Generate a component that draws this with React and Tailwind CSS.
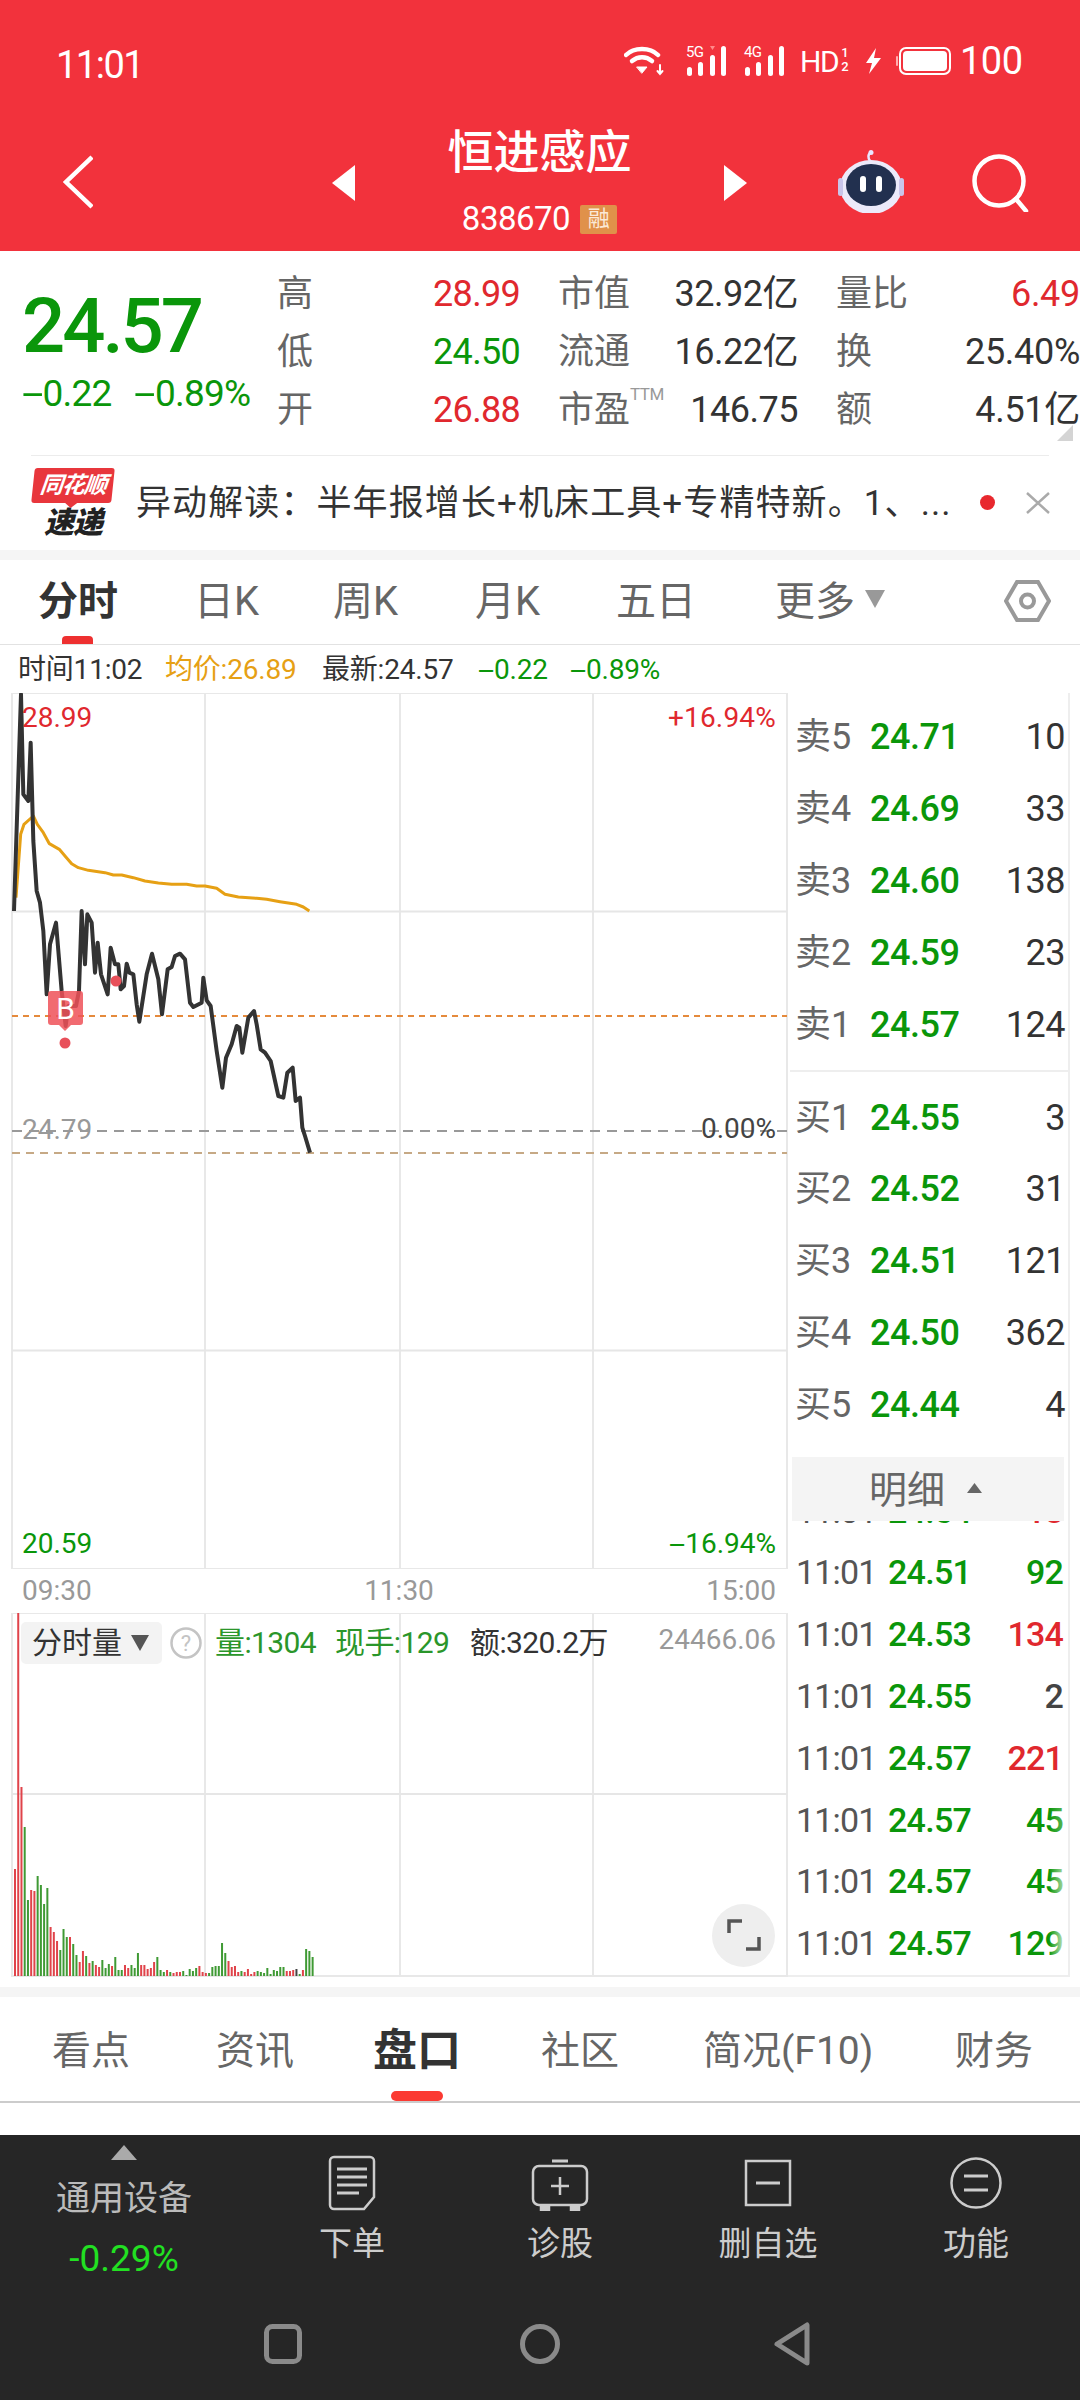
import { useState } from 'react'

const font = { fontFamily: 'Roboto, "Noto Sans CJK SC", sans-serif' }

// page coordinates of the two intraday lines, traced at 3x
const pricePts = [[42,690],[63,40],[70,340],[85,360],[92,185],[100,480],[110,630],[120,665],[130,750],[140,940],[150,790],[168,725],[185,930],[197,1035],[205,975],[228,975],[237,930],[245,690],[255,850],[262,700],[275,725],[285,875],[293,785],[303,880],[323,940],[332,800],[345,850],[355,850],[362,925],[372,915],[380,848],[388,875],[400,880],[410,970],[418,1022],[440,880],[456,818],[475,895],[486,1000],[503,865],[515,858],[525,825],[540,818],[555,835],[570,965],[580,978],[605,965],[610,890],[620,958],[632,975],[650,1110],[667,1220],[678,1130],[695,1090],[710,1035],[718,1040],[727,1115],[745,1010],[762,990],[770,1030],[782,1105],[795,1115],[812,1140],[835,1245],[850,1250],[862,1175],[878,1160],[887,1260],[900,1250],[907,1340],[915,1365],[930,1415]]
const avgPts = [[48,650],[62,460],[72,430],[100,405],[112,430],[130,455],[148,488],[178,505],[195,525],[215,548],[235,560],[265,568],[315,575],[340,582],[365,582],[400,590],[435,600],[475,606],[515,610],[560,610],[590,615],[615,615],[650,622],[675,640],[715,648],[770,652],[800,655],[840,662],[890,670],[910,678],[928,690]]
const toLine = (pts) => pts.map(([x, y]) => `${x / 3},${y / 3 + 680}`).join(' ')

const volumes = 'r107 r363 r189 g149 g76 r86 r85 g100 g91 g72 g88 r49 r44 r35 g26 g47 g39 r39 g32 g21 r14 r25 g20 r13 g15 r11 r9 g16 g8 g12 r10 g19 g6 g6 r11 r8 g11 g8 g23 r11 r11 r7 r8 r14 g19 g6 g4 r6 g4 r3 r4 r4 g5 g1 g7 g5 g8 r10 r4 r3 g3 g9 g10 g10 g33 g23 r15 r9 r10 r4 g5 r4 r7 r2 r4 g5 g4 g3 g8 g2 g6 g5 g9 g9 r5 r5 r6 k7 g2 r6 g27 g25 g19'.split(' ')
const volColor = { r: '#e0434a', g: '#3f9a34', k: '#444' }

const stats = [
  ['高', '28.99', 'text-[#e0282e]', '市值', '32.92亿', '量比', '6.49', 'text-[#e0282e]'],
  ['低', '24.50', 'text-[#0a960a]', '流通', '16.22亿', '换', '25.40%', 'text-[#333]'],
  ['开', '26.88', 'text-[#e0282e]', '市盈', '146.75', '额', '4.51亿', 'text-[#333]'],
]
const sells = [['卖5', '24.71', '10'], ['卖4', '24.69', '33'], ['卖3', '24.60', '138'], ['卖2', '24.59', '23'], ['卖1', '24.57', '124']]
const buys = [['买1', '24.55', '3'], ['买2', '24.52', '31'], ['买3', '24.51', '121'], ['买4', '24.50', '362'], ['买5', '24.44', '4']]
const trades = [
  ['24.54', '18', 'text-[#e0282e]', ''],
  ['24.51', '92', 'text-[#0a960a]', ''],
  ['24.53', '134', 'text-[#e0282e]', ''],
  ['24.55', '2', 'text-[#444]', ''],
  ['24.57', '221', 'text-[#e0282e]', ''],
  ['24.57', '45', 'text-[#0a960a]', 'opacity-30'],
  ['24.57', '45', 'text-[#0a960a]', 'opacity-60'],
  ['24.57', '129', 'text-[#0a960a]', 'opacity-70'],
]

// the app draws its minus sign wider than a plain hyphen
const Neg = () => <span className="inline-block origin-left scale-x-[2.1] mr-[0.3em]">-</span>

const Signal = ({ label, hot }) => (
  <div className="relative w-[41px] h-[30px]">
    <span className="absolute left-0 -top-[1px] text-[15px] leading-[15px] tracking-[-0.8px] text-white">{label}</span>
    <svg viewBox="0 0 41 30" className="absolute inset-0 w-full h-full" fill="white">
      <rect x="1" y="21" width="5" height="9" rx="2.5" />
      <rect x="12" y="16" width="5" height="14" rx="2.5" />
      <rect x="24" y="9" width="5" height="21" rx="2.5" />
      <rect x="35" y="0" width="5" height="30" rx="2.5" />
      {hot && <path d="M24 0h5l-2.5 4z" fill="#ff8a8a" />}
    </svg>
  </div>
)

const StatusBar = () => (
  <div className="h-[100px] pt-[46px] pl-[56px] flex items-start text-white">
    <span className="w-[84px] text-[38px] leading-[38px] tracking-[-1.5px] whitespace-nowrap">11:01</span>
    <div className="ml-[484px] flex items-start">
      <svg viewBox="0 0 40 30" className="w-[40px] h-[30px]" fill="none" stroke="white" strokeLinecap="round">
        <path d="M2 9C10 1 26 1 34 9" strokeWidth="4.5" />
        <path d="M8 15c6-5 14-5 20 0" strokeWidth="4.5" />
        <path d="M13 21h10l-5 6z" fill="white" strokeWidth="1" />
        <path d="M36 19v9m-2.5-3 2.5 3 2.5-3" strokeWidth="2" />
      </svg>
      <div className="ml-[22px]"><Signal label="5G" hot /></div>
      <div className="ml-[17px]"><Signal label="4G" /></div>
      <span className="ml-[15px] w-[39px] text-[30px] leading-[31px] tracking-[-1.5px] whitespace-nowrap">HD</span>
      <span className="ml-[2px] w-[8px] flex flex-col items-center text-[13px] leading-[14px] font-medium"><span>1</span><span>2</span></span>
      <svg viewBox="0 0 17 26" className="ml-[16px] mt-[2px] w-[17px] h-[26px]" fill="white"><path d="M11 0 1 15h6l-3 11 12-16H9z" /></svg>
      <svg viewBox="0 0 56 28" className="ml-[13px] mt-[1px] w-[56px] h-[28px]" fill="none">
        <rect x="5" y="1" width="50" height="26" rx="6" stroke="white" strokeWidth="2" />
        <rect x="8" y="4" width="44" height="20" rx="4" fill="white" />
        <path d="M2 10v8" stroke="#ffb0b0" strokeWidth="2" strokeLinecap="round" />
      </svg>
      <span className="ml-[9px] text-[38px] leading-[31px] tracking-[-0.5px]">100</span>
    </div>
  </div>
)

// round robot head on the title bar
const Robot = () => (
  <svg viewBox="0 0 66 64" className="w-[66px] h-[64px]">
    <path d="M32 12c-2-3-2-6 0-8" fill="none" stroke="#e9e6ff" strokeWidth="2.5" />
    <circle cx="33" cy="3.5" r="2.5" fill="#e9e6ff" />
    <ellipse cx="33" cy="38" rx="31" ry="27" fill="#eceafa" />
    <rect x="0" y="29" width="5" height="18" rx="2.5" fill="#c9c5ea" />
    <rect x="61" y="29" width="5" height="18" rx="2.5" fill="#c9c5ea" />
    <ellipse cx="33" cy="36" rx="25" ry="21" fill="#22304f" />
    <rect x="22" y="27" width="6" height="16" rx="3" fill="white" />
    <rect x="38" y="27" width="6" height="16" rx="3" fill="white" />
  </svg>
)

const TitleBar = () => (
  <div className="h-[151px] flex items-start text-white">
    <svg viewBox="0 0 30 54" className="ml-[63px] mt-[55px] w-[30px] h-[54px]" fill="none" stroke="white" strokeWidth="4.5">
      <path d="M29 2 3 27l26 25" />
    </svg>
    <svg viewBox="0 0 23 36" className="ml-[239px] mt-[65px] w-[23px] h-[36px]" fill="white"><path d="M23 0v36L0 18z" /></svg>
    <div className="w-[369px] flex flex-col items-center">
      <span className="mt-[29px] h-[46px] text-[46px] leading-[46px] font-medium">恒进感应</span>
      <div className="mt-[29px] flex items-center">
        <span className="text-[33px] leading-[30px] tracking-[-0.5px]">838670</span>
        <span className="ml-[10px] w-[37px] h-[29px] rounded-[2px] bg-[#e0914a] flex items-center justify-center text-[22px] leading-none text-[#fbe9d6]">融</span>
      </div>
    </div>
    <svg viewBox="0 0 23 36" className="mt-[65px] w-[23px] h-[36px]" fill="white"><path d="M0 0v36l23-18z" /></svg>
    <div className="ml-[91px] mt-[49px]"><Robot /></div>
    <svg viewBox="0 0 58 58" className="ml-[68px] mt-[54px] w-[58px] h-[58px]" fill="none" stroke="white" strokeWidth="4.5">
      <circle cx="27" cy="27" r="24.5" />
      <path d="m44 45 10 12" strokeLinecap="round" />
    </svg>
  </div>
)

const QuotePanel = () => (
  <div className="relative h-[204px] flex bg-white">
    <div className="w-[277px] pl-[22px] pt-[43px]">
      <div className="text-[76px] leading-[64px] font-medium tracking-[-3px] text-[#0a960a]">24.57</div>
      <div className="mt-[21px] flex text-[37px] leading-[30px] tracking-[-0.8px] text-[#0a960a]">
        <span><Neg />0.22</span>
        <span className="ml-[23px]"><Neg />0.89%</span>
      </div>
    </div>
    <div className="pt-[14px] flex flex-col">
      {stats.map(([a, av, ac, b, bv, c, cv, cc], i) => (
        <div key={a} className="h-[58px] w-[803px] flex items-center text-[36px] leading-none">
          <div className="w-[243px] flex justify-between items-center">
            <span className="text-[#666]">{a}</span>
            <span className={`tracking-[-0.7px] ${ac}`}>{av}</span>
          </div>
          <div className="ml-[38px] w-[240px] flex justify-between items-center">
            <span className="text-[#666]">{b}{i === 2 && <sup className="text-[17px] leading-none align-[14px] tracking-[-0.5px] text-[#999]">TTM</sup>}</span>
            <span className="tracking-[-0.5px] text-[#333]">{bv}</span>
          </div>
          <div className="ml-[38px] w-[244px] flex justify-between items-center">
            <span className="text-[#666]">{c}</span>
            <span className={`tracking-[-0.3px] ${cc}`}>{cv}</span>
          </div>
        </div>
      ))}
    </div>
    <svg viewBox="0 0 16 16" className="absolute right-[7px] top-[174px] w-[16px] h-[16px]" fill="#d4d4d4"><path d="M16 0v16H0z" /></svg>
  </div>
)

const NewsBar = () => (
  <div className="h-[94px] bg-white flex items-center">
    <div className="ml-[32px] w-[82px] flex flex-col items-center">
      <div className="relative w-[80px] h-[35px] -skew-x-6 rounded-[3px] bg-[#e8363c] flex items-center justify-center text-[23px] leading-none font-bold italic text-white tracking-[-1px]">
        同花顺
        <span className="absolute left-[34px] -bottom-[5px] w-0 h-0 border-x-[6px] border-x-transparent border-t-[5px] border-t-[#e8363c]" />
      </div>
      <div className="mt-[5px] text-[30px] leading-[30px] font-black italic text-[#222] tracking-[-1px]">速递</div>
    </div>
    <span className="ml-[22px] mt-[2px] w-[816px] whitespace-nowrap text-[35px] leading-none text-[#333] tracking-[1.1px]">异动解读：半年报增长+机床工具+专精特新。1、...</span>
    <span className="ml-[28px] w-[15px] h-[15px] rounded-full bg-[#e8282e]" />
    <svg viewBox="0 0 24 22" className="ml-[31px] w-[24px] h-[22px]" stroke="#aaa" strokeWidth="2.5"><path d="M1 1l22 20M23 1 1 21" /></svg>
  </div>
)

const ChartTabs = () => {
  const [active] = useState('分时')
  return (
    <div className="h-[85px] bg-white border-b border-[#e2e2e2] relative flex items-center text-[40px] leading-none text-[#666]">
      <span className="ml-[38px] w-[156px] font-bold text-[#333]">分时</span>
      <span className="w-[139px]">日K</span>
      <span className="w-[142px]">周K</span>
      <span className="w-[141px]">月K</span>
      <span className="w-[159px]">五日</span>
      <span>更多</span>
      <svg viewBox="0 0 20 18" className="ml-[10px] -mt-[6px] w-[20px] h-[18px]" fill="#999"><path d="M0 0h20L10 18z" /></svg>
      <svg viewBox="0 0 47 44" className="ml-[119px] -mt-[2px] w-[47px] h-[44px]" fill="none" stroke="#999" strokeWidth="4">
        <path d="M13 3h21l11 19-11 19H13L2 22z" />
        <circle cx="23.5" cy="22" r="6.5" />
      </svg>
      {active && <span className="absolute left-[62px] bottom-0 w-[31px] h-[8px] rounded-t-[4px] bg-[#ee3030]" />}
    </div>
  )
}

const InfoRow = () => (
  <div className="h-[48px] pt-[2px] flex items-center pl-[18px] text-[28px] leading-none tracking-[-0.2px] bg-white">
    <span className="w-[147px] text-[#333]">时间11:02</span>
    <span className="w-[157px] text-[#e6a014]">均价:26.89</span>
    <span className="w-[156px] text-[#333]">最新:24.57</span>
    <span className="w-[92px] text-[#0a960a]"><Neg />0.22</span>
    <span className="text-[#0a960a]"><Neg />0.89%</span>
  </div>
)

const PriceChart = () => (
  <div className="relative h-[876px] text-[28px] leading-none">
    <svg viewBox="0 692 788 876" className="absolute inset-0 w-[788px] h-[876px]" fill="none">
      <g stroke="#e8e8e8" strokeWidth="2">
        <rect x="12" y="692" width="775" height="876" />
        <path d="M205 692v876M400 692v876M593 692v876" />
        <path d="M12 910.5h775M12 1349.5h775" stroke="#e6e6e6" />
      </g>
      <path d="M12 1015h775" stroke="#e58a3c" strokeWidth="2" strokeDasharray="6 5" />
      <path d="M12 1130h775" stroke="#999" strokeWidth="2" strokeDasharray="10 7" />
      <path d="M12 1152h775" stroke="#c6a985" strokeWidth="2" strokeDasharray="8 6" />
      <polyline points={toLine(avgPts)} stroke="#e6a014" strokeWidth="3" strokeLinejoin="round" />
      <polyline points={toLine(pricePts)} stroke="#333" strokeWidth="4" strokeLinejoin="round" />
      <circle cx="116" cy="980" r="5.5" fill="#e8505a" />
      <circle cx="65" cy="1042" r="5.5" fill="#e8505a" />
      <path d="M51 990h29a3 3 0 0 1 3 3v28a3 3 0 0 1-3 3H71l-6 6-6-6h-8a3 3 0 0 1-3-3v-28a3 3 0 0 1 3-3z" fill="#ee5158" fillOpacity=".85" />
    </svg>
    <span className="absolute left-[50px] top-[301px] w-[31px] text-center text-[30px] text-white">B</span>
    <span className="absolute left-[22px] top-[11px] text-[#e0282e]">28.99</span>
    <span className="absolute right-[12px] top-[11px] tracking-[0.2px] text-[#e0282e]">+16.94%</span>
    <span className="absolute left-[22px] top-[423px] text-[#999]">24.79</span>
    <span className="absolute right-[12px] top-[422px] text-[#444]">0.00%</span>
    <span className="absolute left-[22px] bottom-[11px] text-[#0a960a]">20.59</span>
    <span className="absolute right-[12px] bottom-[11px] text-[#0a960a]"><Neg />16.94%</span>
  </div>
)

const TimeAxis = () => (
  <div className="h-[44px] ml-[22px] mr-[12px] flex items-center justify-between text-[28px] leading-none text-[#999]">
    <span>09:30</span>
    <span>11:30</span>
    <span>15:00</span>
  </div>
)

const VolumeChart = () => (
  <div className="relative h-[364px] text-[30px] leading-none">
    <svg viewBox="0 1612 788 364" className="absolute inset-0 w-[788px] h-[364px]" fill="none">
      <g stroke="#e8e8e8" strokeWidth="2">
        <rect x="12" y="1612" width="775" height="363" />
        <path d="M205 1612v363M400 1612v363M593 1612v363" />
        <path d="M12 1793h775" stroke="#e6e6e6" />
      </g>
      {volumes.map((v, i) => {
        const h = Number(v.slice(1))
        return <rect key={i} x={14 + i * 3.235} y={1975 - h} width="2" height={h} fill={volColor[v[0]]} />
      })}
    </svg>
    <div className="absolute left-[21px] top-[9px] flex items-center">
      <div className="w-[141px] h-[42px] rounded-[5px] bg-[#f3f3f3] flex items-center pl-[11px] text-[#333]">
        <span>分时量</span>
        <svg viewBox="0 0 18 16" className="ml-[9px] w-[18px] h-[16px]" fill="#555"><path d="M0 0h18L9 16z" /></svg>
      </div>
      <svg viewBox="0 0 32 32" className="ml-[8px] w-[32px] h-[32px]" fill="none">
        <circle cx="16" cy="16" r="14.5" stroke="#c4c4c4" strokeWidth="2.5" />
        <text x="16" y="24" textAnchor="middle" fontSize="22" fill="#c4c4c4" style={font}>?</text>
      </svg>
      <span className="ml-[13px] w-[120px] text-[#2a962a] tracking-[-0.6px]">量:1304</span>
      <span className="w-[135px] text-[#2a962a] tracking-[-0.6px]">现手:129</span>
      <span className="text-[#333] tracking-[-0.6px]">额:320.2万</span>
    </div>
    <span className="absolute right-[12px] top-[13px] text-[28px] text-[#999]">24466.06</span>
    <div className="absolute right-[13px] bottom-[10px] w-[63px] h-[63px] rounded-full bg-[#eeeeee] flex items-center justify-center">
      <svg viewBox="0 0 34 34" className="w-[34px] h-[34px]" fill="none" stroke="#555" strokeWidth="3.5">
        <path d="M2 15V3h13M32 19v12H19" />
      </svg>
    </div>
  </div>
)

const BookRow = ({ label, price, vol, h }) => (
  <div className={`flex items-center pl-[7px] ${h}`}>
    <span className="w-[75px] text-[36px] leading-none text-[#666]">{label}</span>
    <span className="w-[96px] text-[36px] leading-none font-medium tracking-[-0.5px] text-[#0a960a]">{price}</span>
    <span className="w-[99px] text-right text-[36px] leading-none tracking-[-0.5px] text-[#333]">{vol}</span>
  </div>
)

const OrderBook = () => (
  <div className="w-[282px] h-[1284px] border-r-2 border-b-2 border-[#eeeeee] flex flex-col">
    <div className="pt-[8px]">
      {sells.map(([l, p, v]) => <BookRow key={l} label={l} price={p} vol={v} h="h-[72px]" />)}
    </div>
    <div className="mt-[9px] h-[2px] ml-[2px] bg-[#eeeeee]" />
    <div className="mt-[10px]">
      {buys.map(([l, p, v]) => <BookRow key={l} label={l} price={p} vol={v} h="h-[71.8px]" />)}
    </div>
    <div className="relative z-10 mt-[16px] mx-[4px] h-[64px] shrink-0 bg-[#f4f4f4] flex items-center text-[38px] leading-none text-[#666]">
      <span className="ml-[77px] mt-[2px]">明细</span>
      <svg viewBox="0 0 15 10" className="ml-[22px] -mt-[2px] w-[15px] h-[10px]" fill="#666"><path d="M7.5 0 15 10H0z" /></svg>
    </div>
    <div className="flex-1 overflow-hidden">
      <div className="-mt-[41px]">
        {trades.map(([p, v, c, fade], i) => (
          <div key={i} className="h-[61.8px] flex items-center pl-[8px] text-[34px] leading-none">
            <span className="w-[92px] tracking-[-0.8px] text-[#555]">11:01</span>
            <span className="w-[95px] font-medium tracking-[-0.7px] text-[#0a960a]">{p}</span>
            <span className={`relative w-[80px] text-right tracking-[-0.8px] font-medium ${c}`}>
              {v}
              {fade && <span className={`absolute right-0 top-0 w-[14px] h-full bg-gradient-to-r from-transparent to-white ${fade}`} />}
            </span>
          </div>
        ))}
      </div>
    </div>
  </div>
)

const SectionTabs = () => (
  <div className="relative h-[106px] pt-[4px] bg-white border-b-2 border-[#cccccc] flex items-center text-[39px] leading-none text-[#666]">
    <span className="ml-[52px] w-[164px]">看点</span>
    <span className="w-[157px]">资讯</span>
    <span className="w-[168px] text-[44px] font-bold text-[#333]">盘口</span>
    <span className="w-[162px]">社区</span>
    <span className="w-[252px]">简况(F10)</span>
    <span>财务</span>
    <span className="absolute left-[391px] bottom-0 w-[52px] h-[10px] rounded-[5px] bg-[#fb3a32]" />
  </div>
)

const ToolItem = ({ label, width, children }) => (
  <div className={`${width} flex flex-col items-center`}>
    <div className="h-[62px] flex items-end">{children}</div>
    <span className="mt-[16px] text-[33px] leading-none text-[#cccccc]">{label}</span>
  </div>
)

const Toolbar = () => (
  <div className="h-[172px] flex items-start">
    <div className="w-[248px] flex flex-col items-center">
      <svg viewBox="0 0 26 15" className="mt-[10px] w-[26px] h-[15px]" fill="#aaa"><path d="M13 0l13 15H0z" /></svg>
      <span className="mt-[21px] text-[34px] leading-none text-[#bbbbbb]">通用设备</span>
      <span className="mt-[25px] text-[37px] leading-none text-[#22e022]">-0.29%</span>
    </div>
    <div className="flex pt-[14px]">
      <ToolItem label="下单" width="w-[208px]">
        <svg viewBox="0 0 48 56" className="w-[48px] h-[56px]" fill="none" stroke="#ccc" strokeWidth="2.5">
          <path d="M6 2h36a4 4 0 0 1 4 4v36l-10 12H6a4 4 0 0 1-4-4V6a4 4 0 0 1 4-4z" />
          <path d="M9 14h30M9 22h30M9 30h30M9 38h22" strokeWidth="3" />
        </svg>
      </ToolItem>
      <ToolItem label="诊股" width="w-[208px]">
        <svg viewBox="0 0 58 52" className="w-[58px] h-[52px]" fill="none" stroke="#ccc" strokeWidth="2.5">
          <path d="M21 2h16" strokeWidth="3" />
          <rect x="2" y="7" width="54" height="39" rx="6" />
          <path d="M29 18v18M20 27h18" />
          <path d="M10 47v4h8v-4M40 47v4h8v-4" fill="#ccc" />
        </svg>
      </ToolItem>
      <ToolItem label="删自选" width="w-[208px]">
        <svg viewBox="0 0 48 48" className="mb-[4px] w-[48px] h-[48px]" fill="none" stroke="#ccc" strokeWidth="2.5">
          <rect x="2" y="2" width="44" height="44" />
          <path d="M12 24h24" strokeWidth="3" />
        </svg>
      </ToolItem>
      <ToolItem label="功能" width="w-[208px]">
        <svg viewBox="0 0 52 52" className="mb-[2px] w-[52px] h-[52px]" fill="none" stroke="#ccc" strokeWidth="2.5">
          <circle cx="26" cy="26" r="24.5" />
          <path d="M14 19h24M14 33h24" strokeWidth="3" />
        </svg>
      </ToolItem>
    </div>
  </div>
)

const SystemNav = () => (
  <div className="h-[93px] flex items-start">
    <svg viewBox="0 0 38 40" className="ml-[264px] mt-[17px] w-[38px] h-[40px]" fill="none" stroke="#8a8a8a" strokeWidth="5">
      <rect x="2.5" y="2.5" width="33" height="35" rx="6" />
    </svg>
    <svg viewBox="0 0 40 40" className="ml-[218px] mt-[17px] w-[40px] h-[40px]" fill="none" stroke="#8a8a8a" strokeWidth="5">
      <circle cx="20" cy="20" r="17.5" />
    </svg>
    <svg viewBox="0 0 38 46" className="ml-[213px] mt-[14px] w-[38px] h-[46px]" fill="none" stroke="#8a8a8a" strokeWidth="5" strokeLinejoin="round">
      <path d="M34 4v38L4 23z" />
    </svg>
  </div>
)

export default function App() {
  return (
    <div className="w-[1080px] h-[2400px] bg-white flex flex-col overflow-hidden" style={font}>
      {/* Red title area */}
      <header className="h-[251px] bg-[#f2323c]">
        <StatusBar />
        <TitleBar />
      </header>

      <QuotePanel />
      <div className="mx-[31px] h-[1px] bg-[#ececec]" />
      <NewsBar />
      <div className="h-[10px] bg-[#f5f5f5]" />

      <ChartTabs />
      <InfoRow />

      {/* Chart column and order book */}
      <div className="h-[1295px] flex">
        <div className="w-[788px]">
          <PriceChart />
          <TimeAxis />
          <VolumeChart />
        </div>
        <OrderBook />
      </div>

      <div className="h-[10px] bg-[#f5f5f5]" />
      <SectionTabs />
      <div className="h-[32px] bg-white" />

      {/* Dark bottom bar */}
      <div className="flex-1 bg-[#262626]">
        <Toolbar />
        <SystemNav />
      </div>
    </div>
  )
}
